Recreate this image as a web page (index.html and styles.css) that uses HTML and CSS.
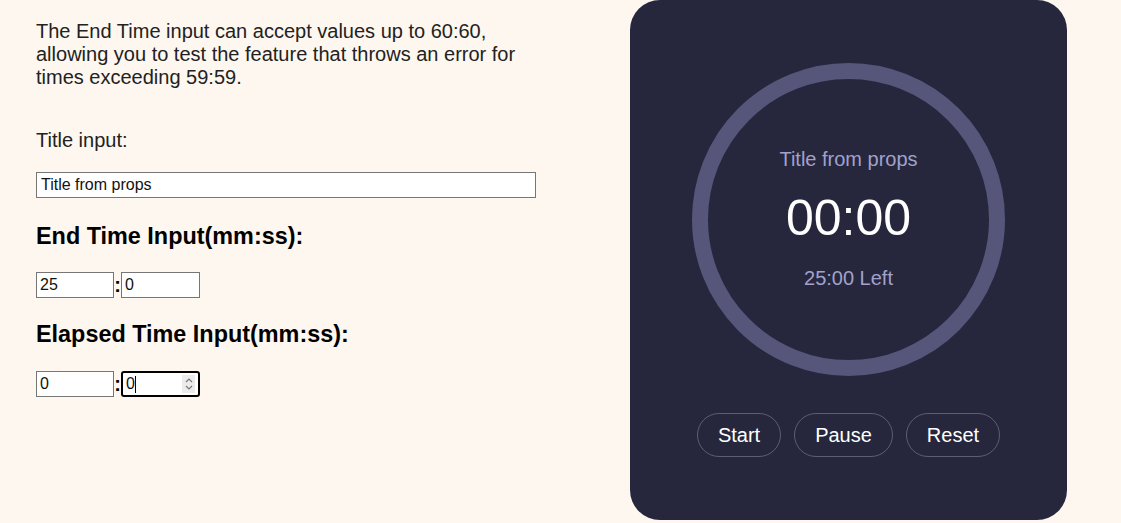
FILE: index.html
```html
<!DOCTYPE html>
<html lang="en">
<head>
<meta charset="utf-8">
<title>Timer</title>
<link rel="stylesheet" href="styles.css">
</head>
<body>
<div class="page">
  <div class="controls">
    <p class="intro">The End Time input can accept values up to 60:60, allowing you to test the feature that throws an error for times exceeding 59:59.</p>
    <p class="label">Title input:</p>
    <input class="title-input" type="text" value="Title from props">
    <h3 class="heading heading-first">End Time Input(mm:ss):</h3>
    <div class="time-row">
      <input class="num" type="text" value="25"><span class="colon">:</span><input class="num num-b" type="text" value="0">
    </div>
    <h3 class="heading">Elapsed Time Input(mm:ss):</h3>
    <div class="time-row">
      <input class="num" type="text" value="0"><span class="colon">:</span><span class="focus-wrap"><input class="num num-b focused" type="text" value="0"><span class="caret"></span><span class="spinner"><svg width="10" height="16" viewBox="0 0 10 16"><path d="M2 6 L5 3 L8 6" fill="none" stroke="#7a7a7a" stroke-width="1.2"/><path d="M2 10 L5 13 L8 10" fill="none" stroke="#7a7a7a" stroke-width="1.2"/></svg></span></span>
    </div>
  </div>
  <div class="panel">
    <div class="ring">
      <div class="timer-title">Title from props</div>
      <div class="timer-time">00:00</div>
      <div class="timer-left">25:00 Left</div>
    </div>
    <div class="buttons">
      <button class="btn">Start</button>
      <button class="btn">Pause</button>
      <button class="btn">Reset</button>
    </div>
  </div>
</div>
</body>
</html>
```
FILE: styles.css
```css
html, body {
  margin: 0;
  padding: 0;
}
body {
  background: #fdf7f0;
  font-family: "Liberation Sans", Arial, sans-serif;
  color: #222;
  font-size: 20px;
}
.page {
  display: flex;
  align-items: flex-start;
  padding-left: 36px;
  gap: 94px;
}
.controls {
  width: 500px;
  flex: none;
}
.intro {
  margin: 20px 0 0;
  line-height: 23px;
}
.label {
  margin: 40px 0 20px;
  line-height: 23px;
}
.title-input {
  display: block;
  box-sizing: border-box;
  width: 500px;
  height: 26px;
  margin: 0;
  padding: 1px 4px;
  border: 1px solid #767676;
  background: #fff;
  font-family: "Liberation Sans", Arial, sans-serif;
  font-size: 16px;
  color: #111;
  outline: none;
}
.heading {
  font-size: 23.4px;
  font-weight: bold;
  color: #000;
  margin: 22.5px 0 23.5px;
  line-height: 27px;
}
.heading-first {
  margin: 24.5px 0 22.5px;
}
.time-row {
  display: flex;
  align-items: center;
  height: 26px;
}
.num {
  box-sizing: border-box;
  width: 78px;
  height: 26px;
  margin: 0;
  padding: 1px 3px;
  border: 1px solid #767676;
  background: #fff;
  font-family: "Liberation Sans", Arial, sans-serif;
  font-size: 16px;
  color: #111;
  outline: none;
}
.num-b {
  width: 79px;
}
.colon {
  font-weight: bold;
  font-size: 20px;
  color: #000;
  width: 7px;
  text-align: center;
  line-height: 26px;
}
.focus-wrap {
  position: relative;
  display: block;
  width: 79px;
  height: 26px;
}
.focused {
  border: 2px solid #000;
  border-radius: 3px;
  padding: 1px 3px;
}
.caret {
  position: absolute;
  left: 14px;
  top: 5px;
  width: 1px;
  height: 17px;
  background: #000;
}
.spinner {
  position: absolute;
  right: 5px;
  top: 4px;
  width: 13px;
  height: 18px;
  background: #ececec;
  display: flex;
  align-items: center;
  justify-content: center;
}
.panel {
  flex: none;
  width: 437px;
  box-sizing: border-box;
  padding: 63px 0;
  background: #26273d;
  border-radius: 30px;
  display: flex;
  flex-direction: column;
  align-items: center;
  gap: 37px;
}
.ring {
  box-sizing: border-box;
  width: 313px;
  height: 313px;
  border: 16px solid #55567a;
  border-radius: 50%;
  display: flex;
  flex-direction: column;
  align-items: center;
  justify-content: center;
}
.timer-title,
.timer-left {
  color: #a1a1cc;
  font-size: 20px;
  line-height: 23px;
}
.timer-title {
  margin-top: -2px;
  margin-bottom: 19px;
}
.timer-time {
  color: #fff;
  font-size: 50px;
  line-height: 57px;
  margin-bottom: 20px;
}
.buttons {
  display: flex;
  gap: 13px;
}
.btn {
  box-sizing: border-box;
  height: 44px;
  padding: 0 20px;
  border: 1px solid #5d5e73;
  border-radius: 22px;
  background: transparent;
  color: #fff;
  font-family: "Liberation Sans", Arial, sans-serif;
  font-size: 20px;
}
```
